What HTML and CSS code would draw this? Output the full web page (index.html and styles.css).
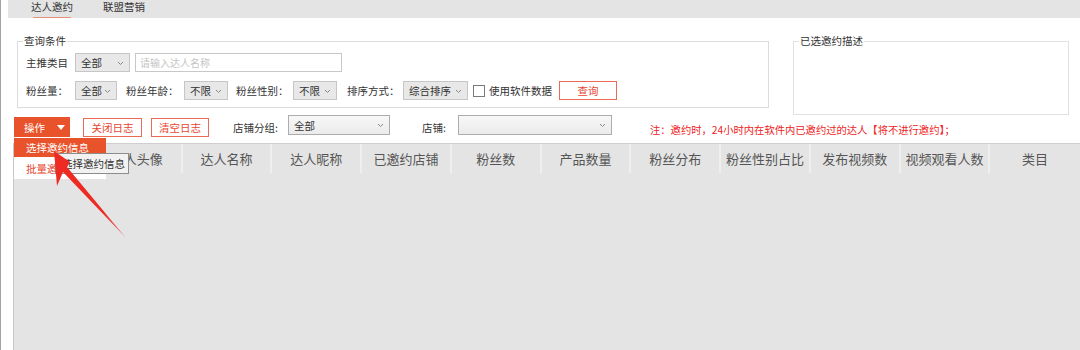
FILE: index.html
```html
<!DOCTYPE html>
<html lang="zh">
<head>
<meta charset="utf-8">
<link rel="stylesheet" href="styles.css">
</head>
<body>
<div class="app">
  <div class="tabs">
    <div class="tab active">达人邀约</div>
    <div class="tab">联盟营销</div>
  </div>

  <div class="query">
    <fieldset class="box box-query">
      <legend>查询条件</legend>
      <div class="row">
        <span class="label w49">主推类目</span>
        <div class="select w55"><span>全部</span><svg class="chev" width="7" height="5" viewBox="0 0 7 5"><path d="M1 1l2.5 2.5L6 1" fill="none" stroke="#888" stroke-width="1"/></svg></div>
        <div class="input">请输入达人名称</div>
      </div>
      <div class="row">
        <span class="label w49">粉丝量：</span>
        <div class="select w42"><span>全部</span><svg class="chev" width="7" height="5" viewBox="0 0 7 5"><path d="M1 1l2.5 2.5L6 1" fill="none" stroke="#888" stroke-width="1"/></svg></div>
        <span class="label ml9 w58">粉丝年龄：</span>
        <div class="select w44"><span>不限</span><svg class="chev" width="7" height="5" viewBox="0 0 7 5"><path d="M1 1l2.5 2.5L6 1" fill="none" stroke="#888" stroke-width="1"/></svg></div>
        <span class="label ml8 w57">粉丝性别：</span>
        <div class="select w44"><span>不限</span><svg class="chev" width="7" height="5" viewBox="0 0 7 5"><path d="M1 1l2.5 2.5L6 1" fill="none" stroke="#888" stroke-width="1"/></svg></div>
        <span class="label ml10 w56">排序方式：</span>
        <div class="select w65"><span>综合排序</span><svg class="chev" width="7" height="5" viewBox="0 0 7 5"><path d="M1 1l2.5 2.5L6 1" fill="none" stroke="#888" stroke-width="1"/></svg></div>
        <span class="checkbox"></span>
        <span class="label cb-label">使用软件数据</span>
        <button class="btn-outline btn-query">查询</button>
      </div>
    </fieldset>

    <fieldset class="box box-desc">
      <legend>已选邀约描述</legend>
    </fieldset>
  </div>

  <div class="toolbar">
    <button class="btn-op">操作<svg width="8" height="5" viewBox="0 0 8 5"><path d="M0 0h8L4 5z" fill="#fff"/></svg></button>
    <button class="btn-outline btn-log">关闭日志</button>
    <button class="btn-outline btn-log btn-clear">清空日志</button>
    <span class="label lbl-group">店铺分组:</span>
    <div class="select select-light w102"><span>全部</span><svg class="chev" width="7" height="5" viewBox="0 0 7 5"><path d="M1 1l2.5 2.5L6 1" fill="none" stroke="#888" stroke-width="1"/></svg></div>
    <span class="label lbl-shop">店铺:</span>
    <div class="select select-light w154"><span></span><svg class="chev" width="7" height="5" viewBox="0 0 7 5"><path d="M1 1l2.5 2.5L6 1" fill="none" stroke="#888" stroke-width="1"/></svg></div>
    <span class="note">注：邀约时，24小时内在软件内已邀约过的达人【将不进行邀约】；</span>
  </div>

  <div class="grid">
    <div class="grid-head">
      <div class="cell first"></div>
      <div class="cell">达人头像</div>
      <div class="cell">达人名称</div>
      <div class="cell">达人昵称</div>
      <div class="cell">已邀约店铺</div>
      <div class="cell">粉丝数</div>
      <div class="cell">产品数量</div>
      <div class="cell">粉丝分布</div>
      <div class="cell">粉丝性别占比</div>
      <div class="cell">发布视频数</div>
      <div class="cell">视频观看人数</div>
      <div class="cell last">类目</div>
    </div>
  </div>

  <div class="menu">
    <div class="menu-item selected">选择邀约信息</div>
    <div class="menu-item">批量邀约</div>
  </div>
  <div class="tooltip">选择邀约信息</div>

  <svg class="arrow" width="140" height="250" viewBox="0 0 140 250">
    <defs>
      <linearGradient id="ag" x1="54" y1="151" x2="126" y2="238" gradientUnits="userSpaceOnUse">
        <stop offset="0" stop-color="#ee2b22"/>
        <stop offset="0.7" stop-color="#ee2b22"/>
        <stop offset="1" stop-color="#e98088"/>
      </linearGradient>
    </defs>
    <polygon points="54,151 70,162 67,167 126,238 63,172 57,186" fill="url(#ag)"/>
  </svg>
</div>
</body>
</html>
```

FILE: styles.css
```css
* { box-sizing: border-box; }

html, body {
  margin: 0;
  padding: 0;
  background: #fff;
}

body {
  width: 1080px;
  height: 350px;
  overflow: hidden;
  font-family: "Microsoft YaHei", "Noto Sans CJK SC", "Noto Sans", sans-serif;
  color: #333;
}

.app {
  position: relative;
  height: 350px;
  border-left: 1px solid #a3a3a3;
  display: flex;
  flex-direction: column;
}

/* tabs */
.tabs {
  height: 18px;
  margin-left: 7px;
  background: #e4e4e4;
  display: flex;
  align-items: flex-start;
  padding-left: 21px;
  flex-shrink: 0;
}

.tab {
  position: relative;
  font-size: 10.5px;
  line-height: 12px;
  padding-top: 1px;
  height: 18px;
  color: #333;
  margin-right: 28px;
}

.tab.active {
  padding-left: 2px;
  padding-right: 2px;
}

.tab.active::after {
  content: "";
  position: absolute;
  left: 4px;
  right: 4px;
  bottom: 0;
  border-bottom: 1px solid #e8907c;
}

/* query area */
.query {
  display: flex;
  align-items: flex-start;
  margin-top: 17px;
  height: 80px;
  flex-shrink: 0;
}

.box {
  margin: 0;
  border: 1px solid #dcdcdc;
  min-width: 0;
}

.box legend {
  font-size: 10.5px;
  line-height: 12px;
  color: #333;
  padding: 0 1px;
  margin-left: 5px;
}

.box-query {
  margin-left: 16px;
  width: 752px;
  height: 73px;
  padding: 6px 8px 0 8px;
}

.box-query legend { margin-left: -3px; }

.box-desc {
  margin-left: 24px;
  width: 276px;
  height: 80px;
  padding: 0;
  border-color: #e2e2e2;
}

.row {
  display: flex;
  align-items: center;
  height: 19px;
  margin-bottom: 9px;
}

.label {
  font-size: 10.5px;
  line-height: 12px;
  color: #333;
  white-space: nowrap;
  flex-shrink: 0;
}

.w49 { width: 49px; }
.w58 { width: 58px; }
.w57 { width: 57px; }
.w56 { width: 56px; }
.ml8 { margin-left: 8px; }
.ml9 { margin-left: 9px; }
.ml10 { margin-left: 10px; }

.select {
  height: 19px;
  border: 1px solid #c6c6c6;
  background: #e8e8e8;
  display: flex;
  align-items: center;
  justify-content: space-between;
  padding: 0 5px 0 5px;
  font-size: 10.5px;
  color: #333;
  flex-shrink: 0;
}

.select .chev { flex-shrink: 0; margin-top: 1px; }

.w42 { width: 42px; }
.w44 { width: 44px; }
.w55 { width: 55px; }
.w65 { width: 65px; }
.w102 { width: 102px; }
.w154 { width: 154px; }

.input {
  margin-left: 5px;
  width: 207px;
  height: 19px;
  border: 1px solid #c8c8c8;
  background: #fff;
  font-size: 10px;
  line-height: 17px;
  padding-left: 4px;
  color: #c4c4c4;
}

.checkbox {
  width: 12px;
  height: 12px;
  border: 1px solid #7a7a7a;
  background: #fff;
  margin-left: 5px;
  flex-shrink: 0;
}

.cb-label { margin-left: 4px; width: 66px; }

.btn-outline {
  font-family: inherit;
  font-size: 10.5px;
  background: #fff;
  border: 1px solid #ea6a55;
  color: #e8452f;
  padding: 0;
  height: 19px;
  line-height: 17px;
  flex-shrink: 0;
}

.btn-query {
  width: 58px;
  margin-left: 4px;
}

/* toolbar */
.toolbar {
  height: 22px;
  margin-bottom: 6px;
  display: flex;
  align-items: flex-start;
  padding-left: 13px;
  flex-shrink: 0;
}

.btn-op {
  font-family: inherit;
  width: 56px;
  height: 20px;
  margin-top: 2px;
  border: none;
  background: #e9532b;
  color: #fff;
  font-size: 10.5px;
  padding: 0 0 0 10px;
  display: flex;
  align-items: center;
  gap: 12px;
}

.btn-log {
  width: 59px;
  margin-left: 13px;
  margin-top: 3px;
}

.btn-clear {
  width: 58px;
  margin-left: 9px;
}

.lbl-group {
  margin-left: 24px;
  margin-top: 7px;
  width: 55px;
}

.select-light {
  background: linear-gradient(#f7f7f7, #ebebeb);
  border-color: #adadad;
  height: 20px;
}

.lbl-shop {
  margin-left: 32px;
  margin-top: 7px;
  width: 36px;
}

.note {
  margin-left: 38px;
  margin-top: 9px;
  font-size: 10.3px;
  line-height: 12px;
  color: #ee2222;
  white-space: nowrap;
}

/* grid */
.grid {
  flex: 1;
  margin-left: 12px;
  border-left: 1px solid #c8c8c8;
  border-top: 1px solid #cfcfcf;
  background: #e4e4e4;
}

.grid-head {
  display: grid;
  grid-template-columns: 79px repeat(11, 1fr);
  height: 29px;
}

.cell {
  display: flex;
  align-items: center;
  justify-content: center;
  font-size: 13px;
  color: #555;
  border-right: 2px solid #efefef;
  white-space: nowrap;
}

.cell.last { border-right: none; }

/* overlays */
.menu {
  position: absolute;
  left: 13px;
  top: 138px;
  width: 92px;
  background: #fff;
}

.menu-item {
  height: 20px;
  font-size: 10.5px;
  line-height: 20px;
  padding-left: 12px;
  color: #e8452f;
}

.menu-item.selected {
  background: #e9532b;
  color: #fff;
  height: 19px;
  line-height: 19px;
}

.menu-item + .menu-item {
  height: 22px;
  line-height: 24px;
}

.tooltip {
  position: absolute;
  left: 54px;
  top: 153px;
  width: 74px;
  height: 21px;
  border: 1px solid #8c8c8c;
  background: #f2f2f2;
  font-size: 10.5px;
  line-height: 19px;
  padding-left: 6px;
  color: #333;
  white-space: nowrap;
}

.arrow {
  position: absolute;
  left: -1px;
  top: 0;
  pointer-events: none;
}
```
